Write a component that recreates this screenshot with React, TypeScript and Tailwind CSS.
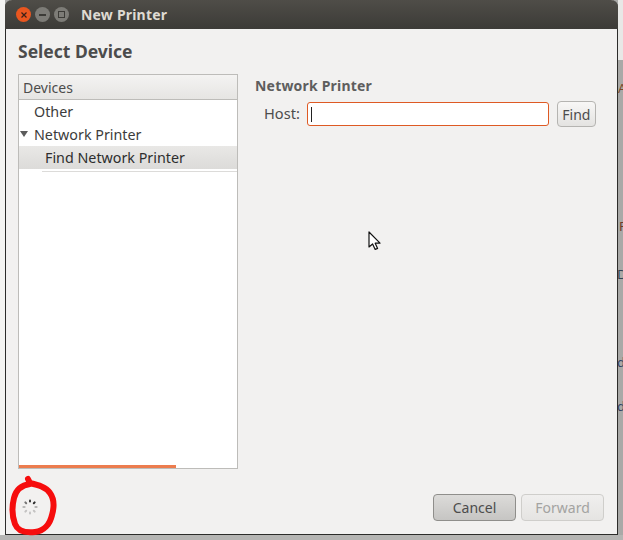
import React from 'react'

const font = { fontFamily: '"Noto Sans", sans-serif' }

function WinButton({ className = '', children }: { className?: string; children?: React.ReactNode }) {
  return (
    <div className={`w-[15px] h-[15px] rounded-full flex items-center justify-center ${className}`}>
      {children}
    </div>
  )
}

function Spinner() {
  const alphas = [0.9, 0.95, 0.3, 0.22, 0.22, 0.22, 0.28, 0.6]
  return (
    <svg width="16" height="16" viewBox="0 0 16 16">
      {alphas.map((a, i) => (
        <line
          key={i}
          x1="8"
          y1="1.4"
          x2="8"
          y2="2.6"
          stroke="#222"
          strokeOpacity={a}
          strokeWidth="2"
          strokeLinecap="round"
          transform={`rotate(${i * 45} 8 8)`}
        />
      ))}
    </svg>
  )
}

export default function App() {
  return (
    <div className="relative w-[623px] h-[540px] overflow-hidden bg-[#a9a9a7]" style={font}>
      {/* what is left of the desktop behind the dialog */}
      <div className="absolute left-0 top-0 w-[5px] h-[540px] bg-[#f4f4f2]" />
      <div className="absolute left-0 top-[535px] w-[623px] h-[5px] bg-[#b5b5b3]" />
      <div className="absolute left-[618px] top-0 w-[5px] h-[60px] bg-[#e8e8e6]" />
      <span className="absolute left-[618px] top-[80px] text-[13px] leading-4 text-[#7a4a2a]">A</span>
      <span className="absolute left-[619px] top-[218px] text-[13px] leading-4 text-[#6b3a2a]">F</span>
      <span className="absolute left-[617px] top-[266px] text-[13px] leading-4 text-[#334455]">D</span>
      <span className="absolute left-[617px] top-[354px] text-[13px] leading-4 text-[#334466]">d</span>
      <span className="absolute left-[617px] top-[398px] text-[13px] leading-4 text-[#334466]">d</span>

      {/* window */}
      <div className="relative ml-[5px] w-[613px] h-[535px] flex flex-col border-x border-b border-[#2c2c2a] rounded-t-[7px] bg-[#f2f1f0]">
        <div className="h-[29px] shrink-0 -mx-px rounded-t-[7px] bg-gradient-to-b from-[#4f4d48] to-[#3c3b37] flex items-center pl-[11px]">
          <div className="flex gap-[4px] items-center">
            <WinButton className="bg-[#e9561f]">
              <svg width="8" height="8" viewBox="0 0 8 8"><path d="M1.5 1.5l5 5M6.5 1.5l-5 5" stroke="#3a2018" strokeWidth="1.2" /></svg>
            </WinButton>
            <WinButton className="bg-[#7d7c77]">
              <div className="w-[7px] h-[2px] bg-[#3c3b37]" />
            </WinButton>
            <WinButton className="bg-[#7d7c77]">
              <div className="w-[7px] h-[7px] border border-[#3c3b37]" />
            </WinButton>
          </div>
          <span className="ml-[12px] text-[14px] font-bold tracking-[0.2px] text-[#dfdbd2]">New Printer</span>
        </div>

        <div className="flex-1 flex flex-col pl-[12px] pr-[13px] pt-[10px] pb-[13px]">
          <h1 className="text-[17.5px] leading-[24px] font-bold text-[#4c4c4c]">Select Device</h1>
          <div className="flex mt-[11px] h-[395px]">
            {/* device tree */}
            <div className="relative w-[220px] h-full border border-[#bdbcb9] bg-white flex flex-col">
              <div className="h-[25px] shrink-0 border-b border-[#bdbcb9] bg-gradient-to-b from-[#f4f3f2] to-[#e6e5e3] pl-[4px] text-[14px] leading-[25px] text-[#4c4c4c]">
                Devices
              </div>
              <div className="h-[23px] pl-[15px] text-[14.3px] leading-[23px] text-[#3c3c3c]">Other</div>
              <div className="h-[23px] pl-[15px] flex items-center text-[14.3px] text-[#3c3c3c]">
                <svg className="-ml-[15px] mr-[5px] -mt-[2px]" width="10" height="8" viewBox="0 0 10 8"><path d="M1 1h8L5 7z" fill="#5c5c5c" /></svg>
                Network Printer
              </div>
              <div className="h-[23px] pl-[26px] text-[14.3px] leading-[23px] text-[#2e2e2e] bg-gradient-to-b from-[#e9e8e6] to-[#dcdbd9]">
                Find Network Printer
              </div>
              <div className="ml-[23px] mt-[2px] h-px bg-[#dcdbd9]" />
              <div className="absolute left-0 bottom-0 w-[157px] h-[3px] bg-[#ec7c4e]" />
            </div>

            {/* network printer form */}
            <div className="flex-1 pl-[17px]">
              <h2 className="mt-px text-[14px] leading-[22px] font-bold tracking-[0.2px] text-[#5e5e5e]">Network Printer</h2>
              <div className="flex items-center mt-[4px] pl-[9px]">
                <span className="text-[14.6px] text-[#4c4c4c]">Host:</span>
                <div className="ml-[7px] w-[242px] h-[24px] rounded-[3px] border border-[#de5a24] bg-white flex items-center pl-[3px]">
                  <div className="w-px h-[15px] bg-[#222]" />
                </div>
                <button className="ml-[8px] w-[39px] h-[26px] rounded-[4px] border border-[#b5b4b1] bg-gradient-to-b from-[#f8f7f6] to-[#e4e3e1] text-[14px] text-[#4c4c4c]">
                  Find
                </button>
              </div>
            </div>
          </div>

          {/* footer */}
          <div className="flex items-center justify-between mt-[24px] h-[28px] pl-[4px]">
            <Spinner />
            <div className="flex gap-[5px]">
              <button className="w-[83px] h-[27px] rounded-[4px] border border-[#8f8e8b] bg-gradient-to-b from-[#dcdbd9] to-[#c6c5c3] text-[14px] text-[#4c4c4c]">
                Cancel
              </button>
              <button className="w-[83px] h-[27px] rounded-[4px] border border-[#cfcecb] bg-gradient-to-b from-[#f0efee] to-[#e5e4e2] text-[14px] text-[#a3a3a1]">
                Forward
              </button>
            </div>
          </div>
        </div>
      </div>

      {/* red marker drawn on the screenshot */}
      <svg className="absolute left-0 top-[470px]" width="62" height="70" viewBox="0 0 62 70">
        <path
          d="M28 9L30 13C38 15 46 17 50 23C55 30 54 38 52 45C50 54 44 61 35 62C26 63 18 62 15 54C12 46 12 36 14 28C16 20 22 15 30 14"
          fill="none"
          stroke="#f60d0d"
          strokeWidth="6"
          strokeLinecap="round"
          strokeLinejoin="round"
        />
      </svg>

      {/* mouse pointer */}
      <svg className="absolute left-[365px] top-[229px]" width="18" height="24" viewBox="0 0 18 24">
        <path d="M4 3v15l3.6-3 2.6 5.4 2.4-1-2.4-5.2h4.8z" fill="#fff" stroke="#111" strokeWidth="1.2" strokeLinejoin="round" />
      </svg>
    </div>
  )
}
